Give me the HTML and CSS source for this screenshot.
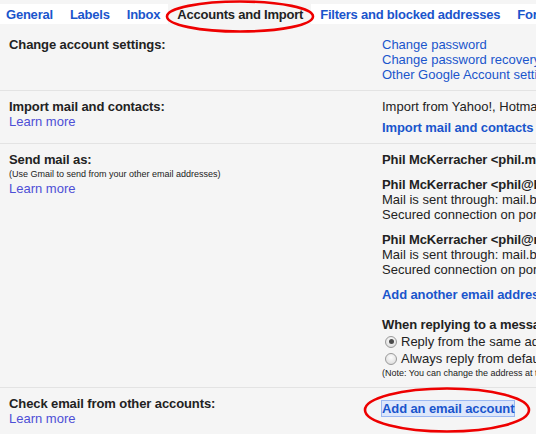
FILE: index.html
```html
<!DOCTYPE html>
<html>
<head>
<meta charset="utf-8">
<link rel="stylesheet" href="styles.css">
</head>
<body>
<div class="page">
  <nav class="tabs">
    <a class="tab">General</a>
    <a class="tab">Labels</a>
    <a class="tab">Inbox</a>
    <a class="tab active">Accounts and Import</a>
    <a class="tab">Filters and blocked addresses</a>
    <a class="tab">Forwarding and POP/IMAP</a>
  </nav>

  <section class="row row-first">
    <div class="label"><b>Change account settings:</b></div>
    <div class="value">
      <a class="link">Change password</a>
      <a class="link">Change password recovery options</a>
      <a class="link">Other Google Account settings</a>
    </div>
  </section>

  <section class="row">
    <div class="label">
      <b>Import mail and contacts:</b>
      <a class="learn">Learn more</a>
    </div>
    <div class="value">
      <span>Import from Yahoo!, Hotmail, AOL, or other webmail or POP3 accounts.</span>
      <a class="link strong gap6">Import mail and contacts</a>
    </div>
  </section>

  <section class="row">
    <div class="label">
      <b>Send mail as:</b>
      <span class="small">(Use Gmail to send from your other email addresses)</span>
      <a class="learn">Learn more</a>
    </div>
    <div class="value">
      <div class="entry"><b>Phil McKerracher &lt;phil.mckerracher@gmail.com&gt;</b></div>
      <div class="entry gap10">
        <b>Phil McKerracher &lt;phil@blackmarble.co.uk&gt;</b>
        <span>Mail is sent through: mail.blackmarble.co.uk</span>
        <span>Secured connection on port 587 using TLS</span>
      </div>
      <div class="entry gap10">
        <b>Phil McKerracher &lt;phil@rosscoe.co.uk&gt;</b>
        <span>Mail is sent through: mail.blackmarble.co.uk</span>
        <span>Secured connection on port 587 using TLS</span>
      </div>
      <a class="link strong gap10">Add another email address</a>
      <b class="gap15">When replying to a message:</b>
      <label class="radio-row first-radio"><input type="radio" name="reply" checked><span>Reply from the same address the message was sent to</span></label>
      <label class="radio-row"><input type="radio" name="reply"><span>Always reply from default address (currently phil.mckerracher@gmail.com)</span></label>
      <span class="small note">(Note: You can change the address at the time of your reply. Learn more)</span>
    </div>
  </section>

  <section class="row row-last">
    <div class="label">
      <b>Check email from other accounts:</b>
      <a class="learn">Learn more</a>
    </div>
    <div class="value">
      <a class="link strong focused">Add an email account</a>
    </div>
  </section>
</div>

<svg class="mark mark-tab" width="160" height="36" viewBox="0 0 160 36">
  <ellipse cx="80" cy="17.5" rx="73" ry="15" fill="none" stroke="#ee0000" stroke-width="2.6"/>
</svg>
<svg class="mark mark-add" width="180" height="50" viewBox="0 0 180 50">
  <ellipse cx="90" cy="24" rx="82" ry="21.5" fill="none" stroke="#ee0000" stroke-width="2.6"/>
</svg>
</body>
</html>
```

FILE: styles.css
```css
html, body {
  margin: 0;
  padding: 0;
  overflow: hidden;
  background: #f5f5f5;
}

body {
  font-family: "Liberation Sans", Arial, sans-serif;
  font-size: 13px;
  line-height: 15px;
  color: #222;
  position: relative;
  width: 536px;
  height: 434px;
}

b, .strong {
  font-weight: bold;
  letter-spacing: -0.1px;
}

.page {
  width: 1000px;
  padding-top: 4px;
}

.tabs {
  display: flex;
  background: #fff;
  height: 20px;
}

.tab {
  padding: 0 8px 0 9px;
  line-height: 21px;
  font-weight: bold;
  letter-spacing: -0.22px;
  color: #1a55cc;
  white-space: nowrap;
}

.tab:first-child {
  padding-left: 6px;
}

.tab.active {
  background: #f5f5f5;
  color: #222;
}

.row {
  display: grid;
  grid-template-columns: 382px 1fr;
  padding: 8px 0;
  border-bottom: 1px solid #e3e3e3;
}

.row-first {
  padding-top: 13px;
}

.row-last {
  border-bottom: none;
}

.label {
  padding-left: 9px;
  display: flex;
  flex-direction: column;
  align-items: flex-start;
  white-space: nowrap;
}

.value {
  display: flex;
  flex-direction: column;
  align-items: flex-start;
  white-space: nowrap;
}

.link {
  color: #1a55cc;
}

.learn {
  color: #4d4fd6;
}

.small {
  font-size: 9px;
  line-height: 14px;
}

.note {
  line-height: 12px;
}

.entry {
  display: flex;
  flex-direction: column;
}

.gap6 { margin-top: 6px; }
.gap10 { margin-top: 10px; }
.gap15 { margin-top: 15px; }

.radio-row {
  display: flex;
  align-items: center;
  height: 17px;
}

.first-radio {
  margin-top: 1px;
}

.radio-row input {
  appearance: none;
  -webkit-appearance: none;
  width: 12px;
  height: 12px;
  margin: 0 4px 0 3px;
  border: 1px solid #9a9a9a;
  border-radius: 50%;
  background: radial-gradient(circle at 50% 35%, #fdfdfd 0%, #e6e6e6 60%, #d2d2d2 100%);
  box-sizing: border-box;
  position: relative;
}

.radio-row input:checked::after {
  content: "";
  position: absolute;
  left: 2.5px;
  top: 2.5px;
  width: 5px;
  height: 5px;
  border-radius: 50%;
  background: #4a4a4a;
}

.focused {
  margin-top: 5px;
  background: #dde7fb;
  box-shadow: 0 0 0 1px #9bb8f2;
}

.mark {
  position: absolute;
  pointer-events: none;
}

.mark-tab {
  left: 160px;
  top: -1px;
}

.mark-add {
  left: 357px;
  top: 386px;
}
```
